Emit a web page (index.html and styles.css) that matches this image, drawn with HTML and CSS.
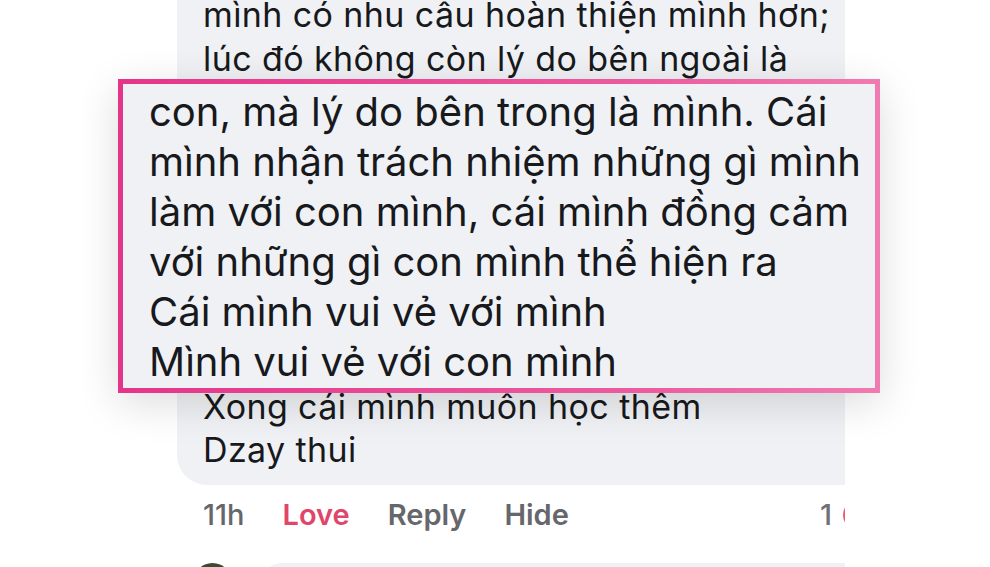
FILE: index.html
```html
<!DOCTYPE html>
<html lang="vi">
<head>
<meta charset="utf-8">
<link rel="stylesheet" href="styles.css">
</head>
<body>
<div class="clip">
  <div class="comment">
    <div class="bubble">
      <p class="body-text">mình có nhu cầu hoàn thiện mình hơn;<br>lúc đó không còn lý do bên ngoài là<br>con, mà lý do bên trong là mình.<br>Cái mình nhận trách nhiệm những gì<br>mình làm với con mình, cái mình đồng<br>cảm với những gì con mình thể hiện<br>ra<br>Cái mình vui vẻ với mình<br>Mình vui vẻ với con mình<br>Xong cái mình muốn học thêm<br>Dzay thui</p>
    </div>
    <div class="actions">
      <span class="time">11h</span>
      <span class="love">Love</span>
      <span>Reply</span>
      <span>Hide</span>
      <span class="count">1<span class="react"></span></span>
    </div>
    <div class="next">
      <span class="avatar"></span>
      <span class="next-bubble"></span>
    </div>
  </div>
</div>
<div class="zoom-box">
  <p class="zoom-text">con, mà lý do bên trong là mình. Cái<br>mình nhận trách nhiệm những gì mình<br>làm với con mình, cái mình đồng cảm<br>với những gì con mình thể hiện ra<br>Cái mình vui vẻ với mình<br>Mình vui vẻ với con mình</p>
</div>
</body>
</html>
```
FILE: styles.css
```css
html, body {
  margin: 0;
  padding: 0;
  background: #ffffff;
}
body {
  position: relative;
  width: 990px;
  height: 567px;
  overflow: hidden;
  font-family: Inter, "Liberation Sans", sans-serif;
  color: #17191c;
}
.clip {
  width: 845px;
  height: 567px;
  overflow: hidden;
}
.comment {
  margin-left: 177px;
}
.bubble {
  width: 720px;
  margin-top: -7px;
  padding: 0 0 13px 26px;
  background: #f0f1f4;
  border-radius: 0 0 30px 30px;
}
.body-text {
  margin: 0;
  font-size: 34px;
  line-height: 43.5px;
  letter-spacing: 0.4px;
  white-space: nowrap;
}
.actions {
  display: flex;
  align-items: center;
  gap: 38px;
  width: 696px;
  margin-top: 12px;
  padding-left: 26px;
  box-sizing: border-box;
  font-size: 29px;
  font-weight: 600;
  line-height: 36px;
  color: #65676b;
}
.actions .time {
  font-weight: 500;
}
.actions .love {
  color: #e0466a;
}
.actions .count {
  margin-left: auto;
  display: flex;
  align-items: center;
  gap: 11px;
  font-weight: 500;
  color: #6f7176;
}
.react {
  display: inline-block;
  width: 30px;
  height: 30px;
  border-radius: 50%;
  background: #f5566f;
}
.next {
  display: flex;
  gap: 30px;
  margin-top: 30px;
  padding-left: 16px;
}
.avatar {
  width: 40px;
  height: 40px;
  border-radius: 50%;
  background: #3c4a34;
}
.next-bubble {
  width: 600px;
  height: 40px;
  background: #f0f1f4;
  border-radius: 20px 0 0 0;
}
.zoom-box {
  position: absolute;
  left: 118px;
  top: 79px;
  width: 762px;
  height: 314px;
  box-sizing: border-box;
  border: 5px solid #e83a8a;
  border-image: linear-gradient(90deg, #e5358a, #ec5c9f 70%, #f07bb0) 1;
  background: #f0f1f5;
  box-shadow: 0 10px 40px rgba(0, 0, 0, 0.14);
  padding: 3px 0 0 26px;
}
.zoom-text {
  margin: 0;
  font-size: 40px;
  line-height: 50px;
  white-space: nowrap;
}
```
